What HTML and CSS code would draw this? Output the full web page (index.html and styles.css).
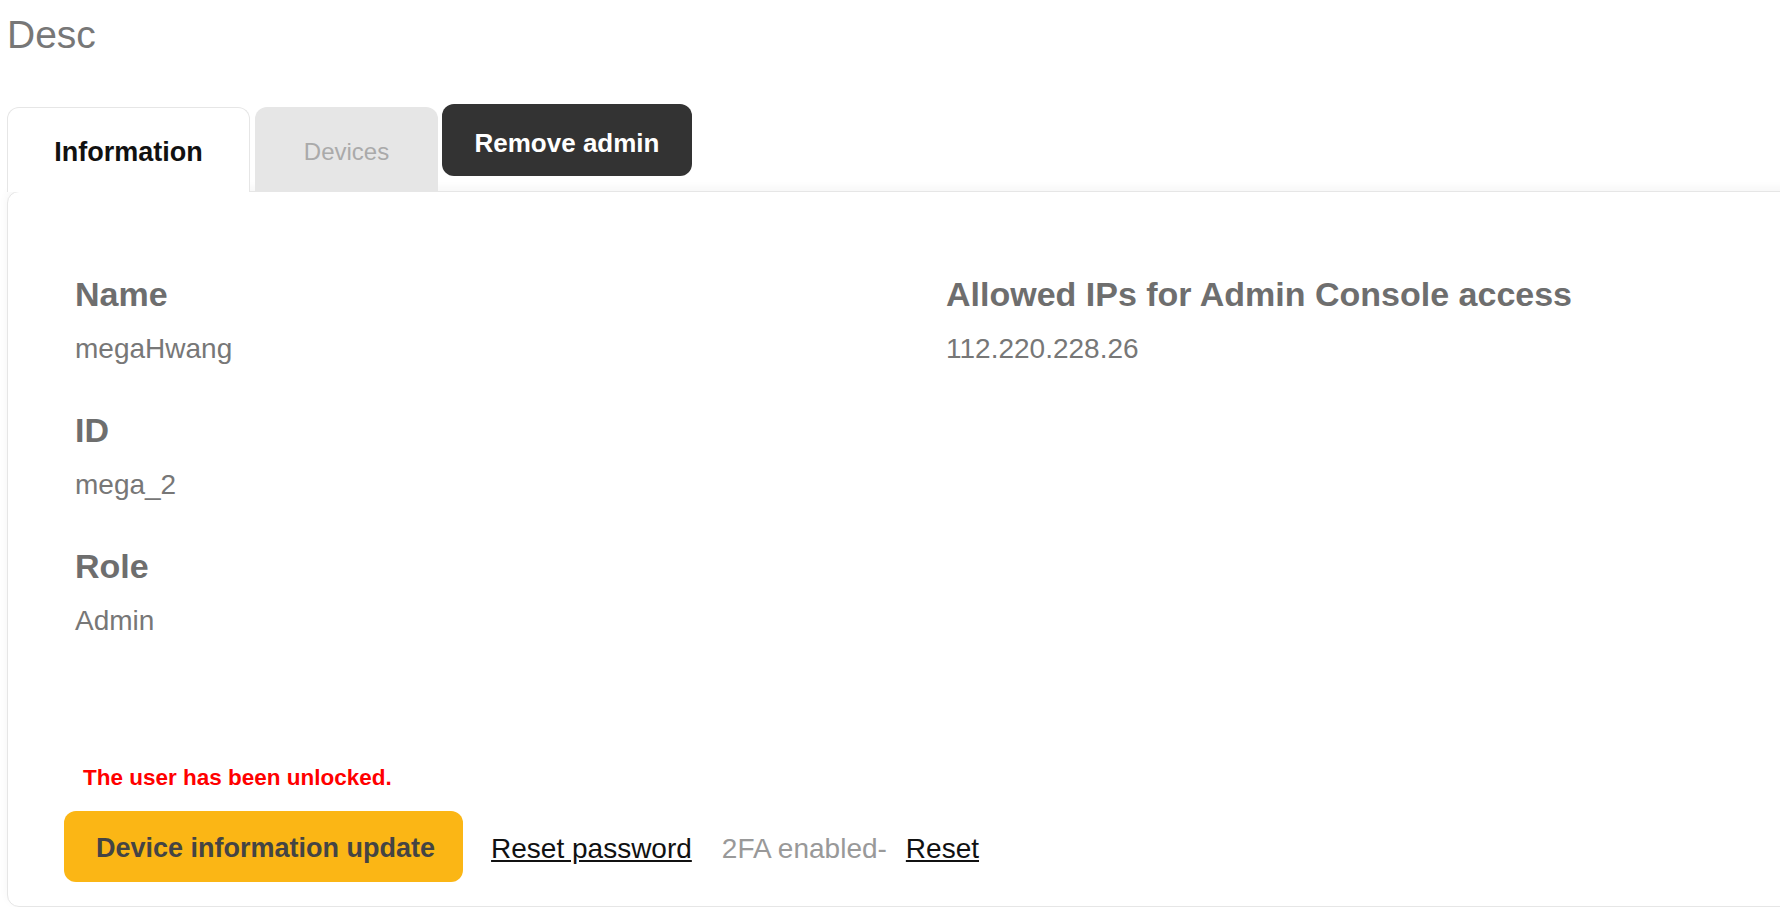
FILE: index.html
```html
<!DOCTYPE html>
<html lang="en">
<head>
<meta charset="utf-8">
<title>Desc</title>
<link rel="stylesheet" href="styles.css">
</head>
<body>
<div class="page">
  <h1 class="title">Desc</h1>
  <div class="tabbar">
    <div class="tab tab-active">Information</div>
    <div class="tab tab-inactive">Devices</div>
    <button class="btn-remove" type="button">Remove admin</button>
  </div>
  <div class="card">
    <div class="info-grid">
      <div class="col">
        <div class="field">
          <div class="field-label">Name</div>
          <div class="field-value">megaHwang</div>
        </div>
        <div class="field">
          <div class="field-label">ID</div>
          <div class="field-value">mega_2</div>
        </div>
        <div class="field">
          <div class="field-label">Role</div>
          <div class="field-value">Admin</div>
        </div>
      </div>
      <div class="col">
        <div class="field">
          <div class="field-label">Allowed IPs for Admin Console access</div>
          <div class="field-value">112.220.228.26</div>
        </div>
      </div>
    </div>
    <div class="footer">
      <div class="notice">The user has been unlocked.</div>
      <div class="actions">
        <button class="btn-update" type="button">Device information update</button>
        <a class="link link-reset-pw" href="#">Reset password</a>
        <span class="status">2FA enabled-</span>
        <a class="link link-reset" href="#">Reset</a>
      </div>
    </div>
  </div>
</div>
</body>
</html>
```

FILE: styles.css
```css
html, body {
  margin: 0;
  padding: 0;
  background: #ffffff;
}

body {
  font-family: "Liberation Sans", Arial, "Noto Sans CJK KR", sans-serif;
  color: #333;
  overflow: hidden;
}

.page {
  padding: 0 0 0 7px;
  overflow: hidden;
}

.title {
  margin: 12px 0 0 0;
  font-size: 39px;
  line-height: 45px;
  font-weight: 400;
  color: #777777;
}

.tabbar {
  display: flex;
  align-items: flex-start;
  margin-top: 47px;
  position: relative;
  z-index: 2;
}

.tab {
  box-sizing: border-box;
  height: 85px;
  margin-top: 3px;
  border-radius: 12px 12px 0 0;
  text-align: center;
}

.tab-active {
  width: 243px;
  padding-top: 29px;
  font-size: 27px;
  line-height: 31px;
  font-weight: 700;
  color: #111111;
  background: #ffffff;
  border: 1px solid #e6e6e6;
  border-bottom: none;
}

.tab-inactive {
  width: 183px;
  margin-left: 5px;
  padding-top: 29px;
  font-size: 24px;
  line-height: 31px;
  color: #aaaaaa;
  background: #e6e6e6;
  height: 84px;
}

.btn-remove {
  box-sizing: border-box;
  width: 250px;
  height: 72px;
  margin-left: 4px;
  padding: 6px 0 0 0;
  border: none;
  border-radius: 12px;
  background: #333333;
  color: #ffffff;
  font-family: inherit;
  font-size: 26px;
  line-height: 30px;
  font-weight: 700;
}

.card {
  position: relative;
  z-index: 1;
  margin-top: -1px;
  margin-right: -40px;
  border: 1px solid #e6e6e6;
  border-radius: 12px;
  background: #ffffff;
  box-shadow: 0 -3px 10px rgba(0, 0, 0, 0.045);
  padding: 82px 0 24px 0;
}

.info-grid {
  display: grid;
  grid-template-columns: 871px 1fr;
  padding-left: 67px;
}

.field {
  margin-bottom: 44px;
}

.field-label {
  font-size: 34px;
  line-height: 40px;
  font-weight: 700;
  color: #6e6e6e;
}

.field-value {
  margin-top: 18px;
  font-size: 28px;
  line-height: 34px;
  color: #777777;
}

.footer {
  margin-top: 82px;
  padding-left: 56px;
}

.notice {
  margin-left: 19px;
  font-size: 22.5px;
  line-height: 27px;
  font-weight: 700;
  color: #ff0000;
}

.actions {
  display: flex;
  align-items: center;
  margin-top: 20px;
}

.btn-update {
  box-sizing: border-box;
  height: 71px;
  padding: 4px 28px 0 32px;
  border: none;
  border-radius: 12px;
  background: #fbb615;
  color: #444444;
  font-family: inherit;
  font-size: 27px;
  line-height: 31px;
  font-weight: 700;
}

.link {
  padding-top: 4px;
  font-size: 28px;
  line-height: 34px;
  color: #111111;
  text-decoration: underline;
}

.link-reset-pw {
  margin-left: 28px;
}

.status {
  margin-left: 30px;
  padding-top: 4px;
  font-size: 28px;
  line-height: 34px;
  color: #999999;
}

.link-reset {
  margin-left: 19px;
}
```
